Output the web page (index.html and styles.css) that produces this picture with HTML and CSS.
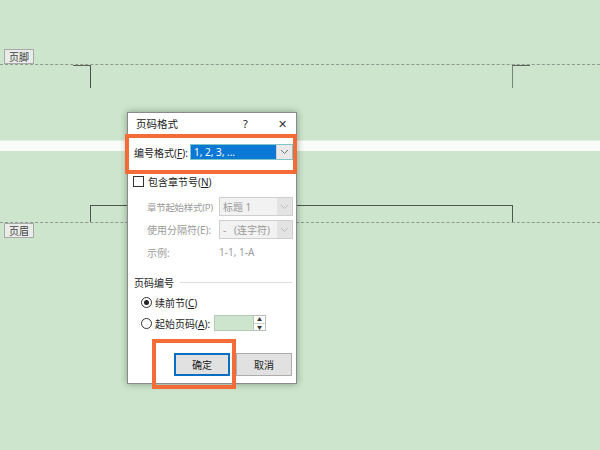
FILE: index.html
```html
<!DOCTYPE html>
<html lang="zh-CN">
<head>
  <meta charset="UTF-8">
  <title>页码格式</title>
  <link rel="stylesheet" href="styles.css">
</head>
<body>
  <div class="canvas">
    <div class="footer-zone">
      <div class="tag">页脚</div>
      <div class="dashed"></div>
      <div class="marks">
        <div class="mark mark-left"></div>
        <div class="mark mark-right"></div>
      </div>
    </div>

    <div class="page-gap"></div>

    <div class="header-zone">
      <div class="header-box"></div>
      <div class="dashed"></div>
      <div class="tag">页眉</div>
    </div>

    <div class="dialog">
      <div class="title-bar">
        <span class="title">页码格式</span>
        <span class="help">?</span>
        <span class="close">&#x2715;</span>
      </div>

      <div class="row row-format">
        <span class="label">编号格式(<u>F</u>):</span>
        <div class="select select-active">
          <span class="value">1, 2, 3, ...</span>
          <span class="arrow"><svg width="9" height="6" viewBox="0 0 9 6"><path d="M1 1l3.5 3.5L8 1" fill="none" stroke="#777" stroke-width="1"/></svg></span>
        </div>
      </div>

      <div class="row row-check">
        <span class="checkbox"></span>
        <span>包含章节号(<u>N</u>)</span>
      </div>

      <div class="row row-sub row-p">
        <span class="label muted">章节起始样式(P)</span>
        <div class="select select-off">
          <span class="value">标题 1</span>
          <span class="arrow"><svg width="9" height="6" viewBox="0 0 9 6"><path d="M1 1l3.5 3.5L8 1" fill="none" stroke="#bbb" stroke-width="1"/></svg></span>
        </div>
      </div>

      <div class="row row-sub row-e">
        <span class="label muted">使用分隔符(E):</span>
        <div class="select select-off">
          <span class="value">-&nbsp;&nbsp;&nbsp;(连字符)</span>
          <span class="arrow"><svg width="9" height="6" viewBox="0 0 9 6"><path d="M1 1l3.5 3.5L8 1" fill="none" stroke="#bbb" stroke-width="1"/></svg></span>
        </div>
      </div>

      <div class="row row-sub row-sample">
        <span class="label muted">示例:</span>
        <span class="muted">1-1, 1-A</span>
      </div>

      <div class="row group-title">
        <span>页码编号</span>
        <span class="group-line"></span>
      </div>

      <div class="row row-radio row-r1">
        <span class="radio on"></span>
        <span>续前节(<u>C</u>)</span>
      </div>

      <div class="row row-radio row-r2">
        <span class="radio"></span>
        <span class="label-r2">起始页码(<u>A</u>):</span>
        <div class="spin">
          <span class="spin-box"></span>
          <span class="spin-btns">
            <span class="spin-btn">&#9650;</span>
            <span class="spin-btn">&#9660;</span>
          </span>
        </div>
      </div>

      <div class="buttons">
        <button class="btn btn-default">确定</button>
        <button class="btn">取消</button>
      </div>
    </div>

    <div class="callout callout-format"></div>
    <div class="callout callout-ok"></div>
  </div>
</body>
</html>
```

FILE: styles.css
```css
html, body {
  margin: 0;
  padding: 0;
}

body {
  background: #cde5cc;
  font-family: "Noto Sans", "Noto Sans CJK SC", sans-serif;
  color: #222;
}

.canvas {
  position: relative;
  width: 600px;
  height: 450px;
  overflow: hidden;
}

/* page background marks */
.footer-zone {
  padding-top: 49px;
}

.tag {
  margin-left: 4px;
  width: 30px;
  height: 15px;
  box-sizing: border-box;
  border: 1px solid #a9a9a9;
  background: #e9ece9;
  font-size: 10px;
  line-height: 13px;
  text-align: center;
  color: #444;
  font-family: "Noto Sans CJK SC", sans-serif;
}

.dashed {
  border-top: 1px dashed #8f9a8f;
}

.marks {
  display: flex;
  justify-content: space-between;
  padding: 0 70px 0 73px;
}

.mark {
  width: 18px;
  height: 23px;
  box-sizing: border-box;
  border-top: 1px solid #5d665d;
}

.mark-left {
  border-right: 1px solid #4a524a;
}

.mark-right {
  border-left: 1px solid #7a837a;
}

.page-gap {
  margin-top: 52px;
  height: 10px;
  background: #f9fbf9;
  border-top: 1px solid #e4efe4;
}

.header-zone {
  margin-top: 54px;
}

.header-box {
  margin-left: 90px;
  width: 423px;
  height: 17px;
  box-sizing: border-box;
  border: 1px solid #4f574f;
  border-bottom: none;
}

/* dialog */
.dialog {
  position: absolute;
  left: 127px;
  top: 112px;
  width: 170px;
  height: 272px;
  box-sizing: border-box;
  background: #fff;
  border: 1px solid #8a8a8a;
  box-shadow: 0 0 7px rgba(0, 0, 0, 0.35);
  font-size: 10px;
  padding: 0 3px 0 5px;
  white-space: nowrap;
}

.title-bar {
  display: flex;
  align-items: center;
  height: 21px;
  margin-left: 3px;
}

.title {
  flex: 1;
  font-size: 10.5px;
}

.help {
  width: 12px;
  margin-right: 23px;
  font-size: 11px;
}

.close {
  margin-right: 6px;
  font-size: 11px;
  color: #333;
}

.row {
  display: flex;
  align-items: center;
}

.row-format {
  margin-top: 10px;
  height: 16px;
}

.row-format .label {
  width: 56px;
  margin-left: 1px;
}

.select {
  display: flex;
  height: 100%;
  flex: 1;
  box-sizing: border-box;
}

.select .value {
  flex: 1;
  display: flex;
  align-items: center;
  padding-left: 3px;
}

.select .arrow {
  width: 15px;
  display: flex;
  align-items: center;
  justify-content: center;
}

.select-active {
  border: 1px solid #7fc6c6;
}

.select-active .value {
  background: #0b78d6;
  color: #fff;
}

.select-active .arrow {
  background: #e9e9e9;
  border-left: 1px solid #d0d0d0;
}

.row-check {
  margin-top: 14px;
  height: 14px;
}

.checkbox {
  width: 11px;
  height: 11px;
  box-sizing: border-box;
  border: 1px solid #333;
  margin-right: 4px;
  background: #fff;
}

.row-sub {
  padding-left: 14px;
}

.row-sub .label {
  width: 72px;
  flex: none;
}

.row-p .label {
  font-size: 9.5px;
  letter-spacing: -0.3px;
}

.muted {
  color: #9a9a9a;
}

.row-p {
  margin-top: 9px;
  height: 19px;
}

.row-e {
  margin-top: 4px;
  height: 19px;
}

.select-off {
  border: 1px solid #cfcfcf;
  background: #f2f2f2;
  color: #9a9a9a;
}

.select-off .arrow {
  background: #e3e3e3;
}

.row-sample {
  margin-top: 6px;
  height: 14px;
}

.group-title {
  margin-top: 16px;
  height: 14px;
  padding-left: 1px;
}

.group-line {
  flex: 1;
  margin-left: 6px;
  margin-right: 1px;
  border-top: 1px solid #dcdcdc;
}

.row-radio {
  padding-left: 8px;
}

.radio {
  position: relative;
  width: 11px;
  height: 11px;
  box-sizing: border-box;
  border: 1px solid #333;
  border-radius: 50%;
  margin-right: 3px;
}

.radio.on::after {
  content: "";
  position: absolute;
  left: 2px;
  top: 2px;
  width: 5px;
  height: 5px;
  border-radius: 50%;
  background: #222;
}

.row-r1 {
  margin-top: 6px;
  height: 14px;
}

.row-r2 {
  margin-top: 6px;
  height: 16px;
}

.label-r2 {
  width: 59px;
}

.spin {
  display: flex;
  height: 16px;
}

.spin-box {
  width: 40px;
  box-sizing: border-box;
  border: 1px solid #b8c9b8;
  background: #cde5cc;
}

.spin-btns {
  display: flex;
  flex-direction: column;
  width: 12px;
  box-sizing: border-box;
  border: 1px solid #bcbcbc;
  border-left: none;
}

.spin-btn {
  flex: 1;
  font-size: 5px;
  line-height: 7px;
  text-align: center;
  color: #333;
}

.spin-btn + .spin-btn {
  border-top: 1px solid #d0d0d0;
}

.buttons {
  display: flex;
  justify-content: flex-end;
  gap: 6px;
  margin-top: 22px;
  margin-right: 1px;
}

.btn {
  width: 56px;
  height: 23px;
  box-sizing: border-box;
  border: 1px solid #adadad;
  background: #e1e1e1;
  font-family: "Noto Sans CJK SC", sans-serif;
  font-size: 10px;
  color: #222;
  padding: 0;
}

.btn-default {
  border: 2px solid #0a6fc2;
}

/* annotation boxes */
.callout {
  position: absolute;
  border: 4px solid #f36c37;
  box-sizing: border-box;
}

.callout-format {
  left: 125px;
  top: 134px;
  width: 172px;
  height: 40px;
}

.callout-ok {
  left: 152px;
  top: 339px;
  width: 84px;
  height: 50px;
}
```
